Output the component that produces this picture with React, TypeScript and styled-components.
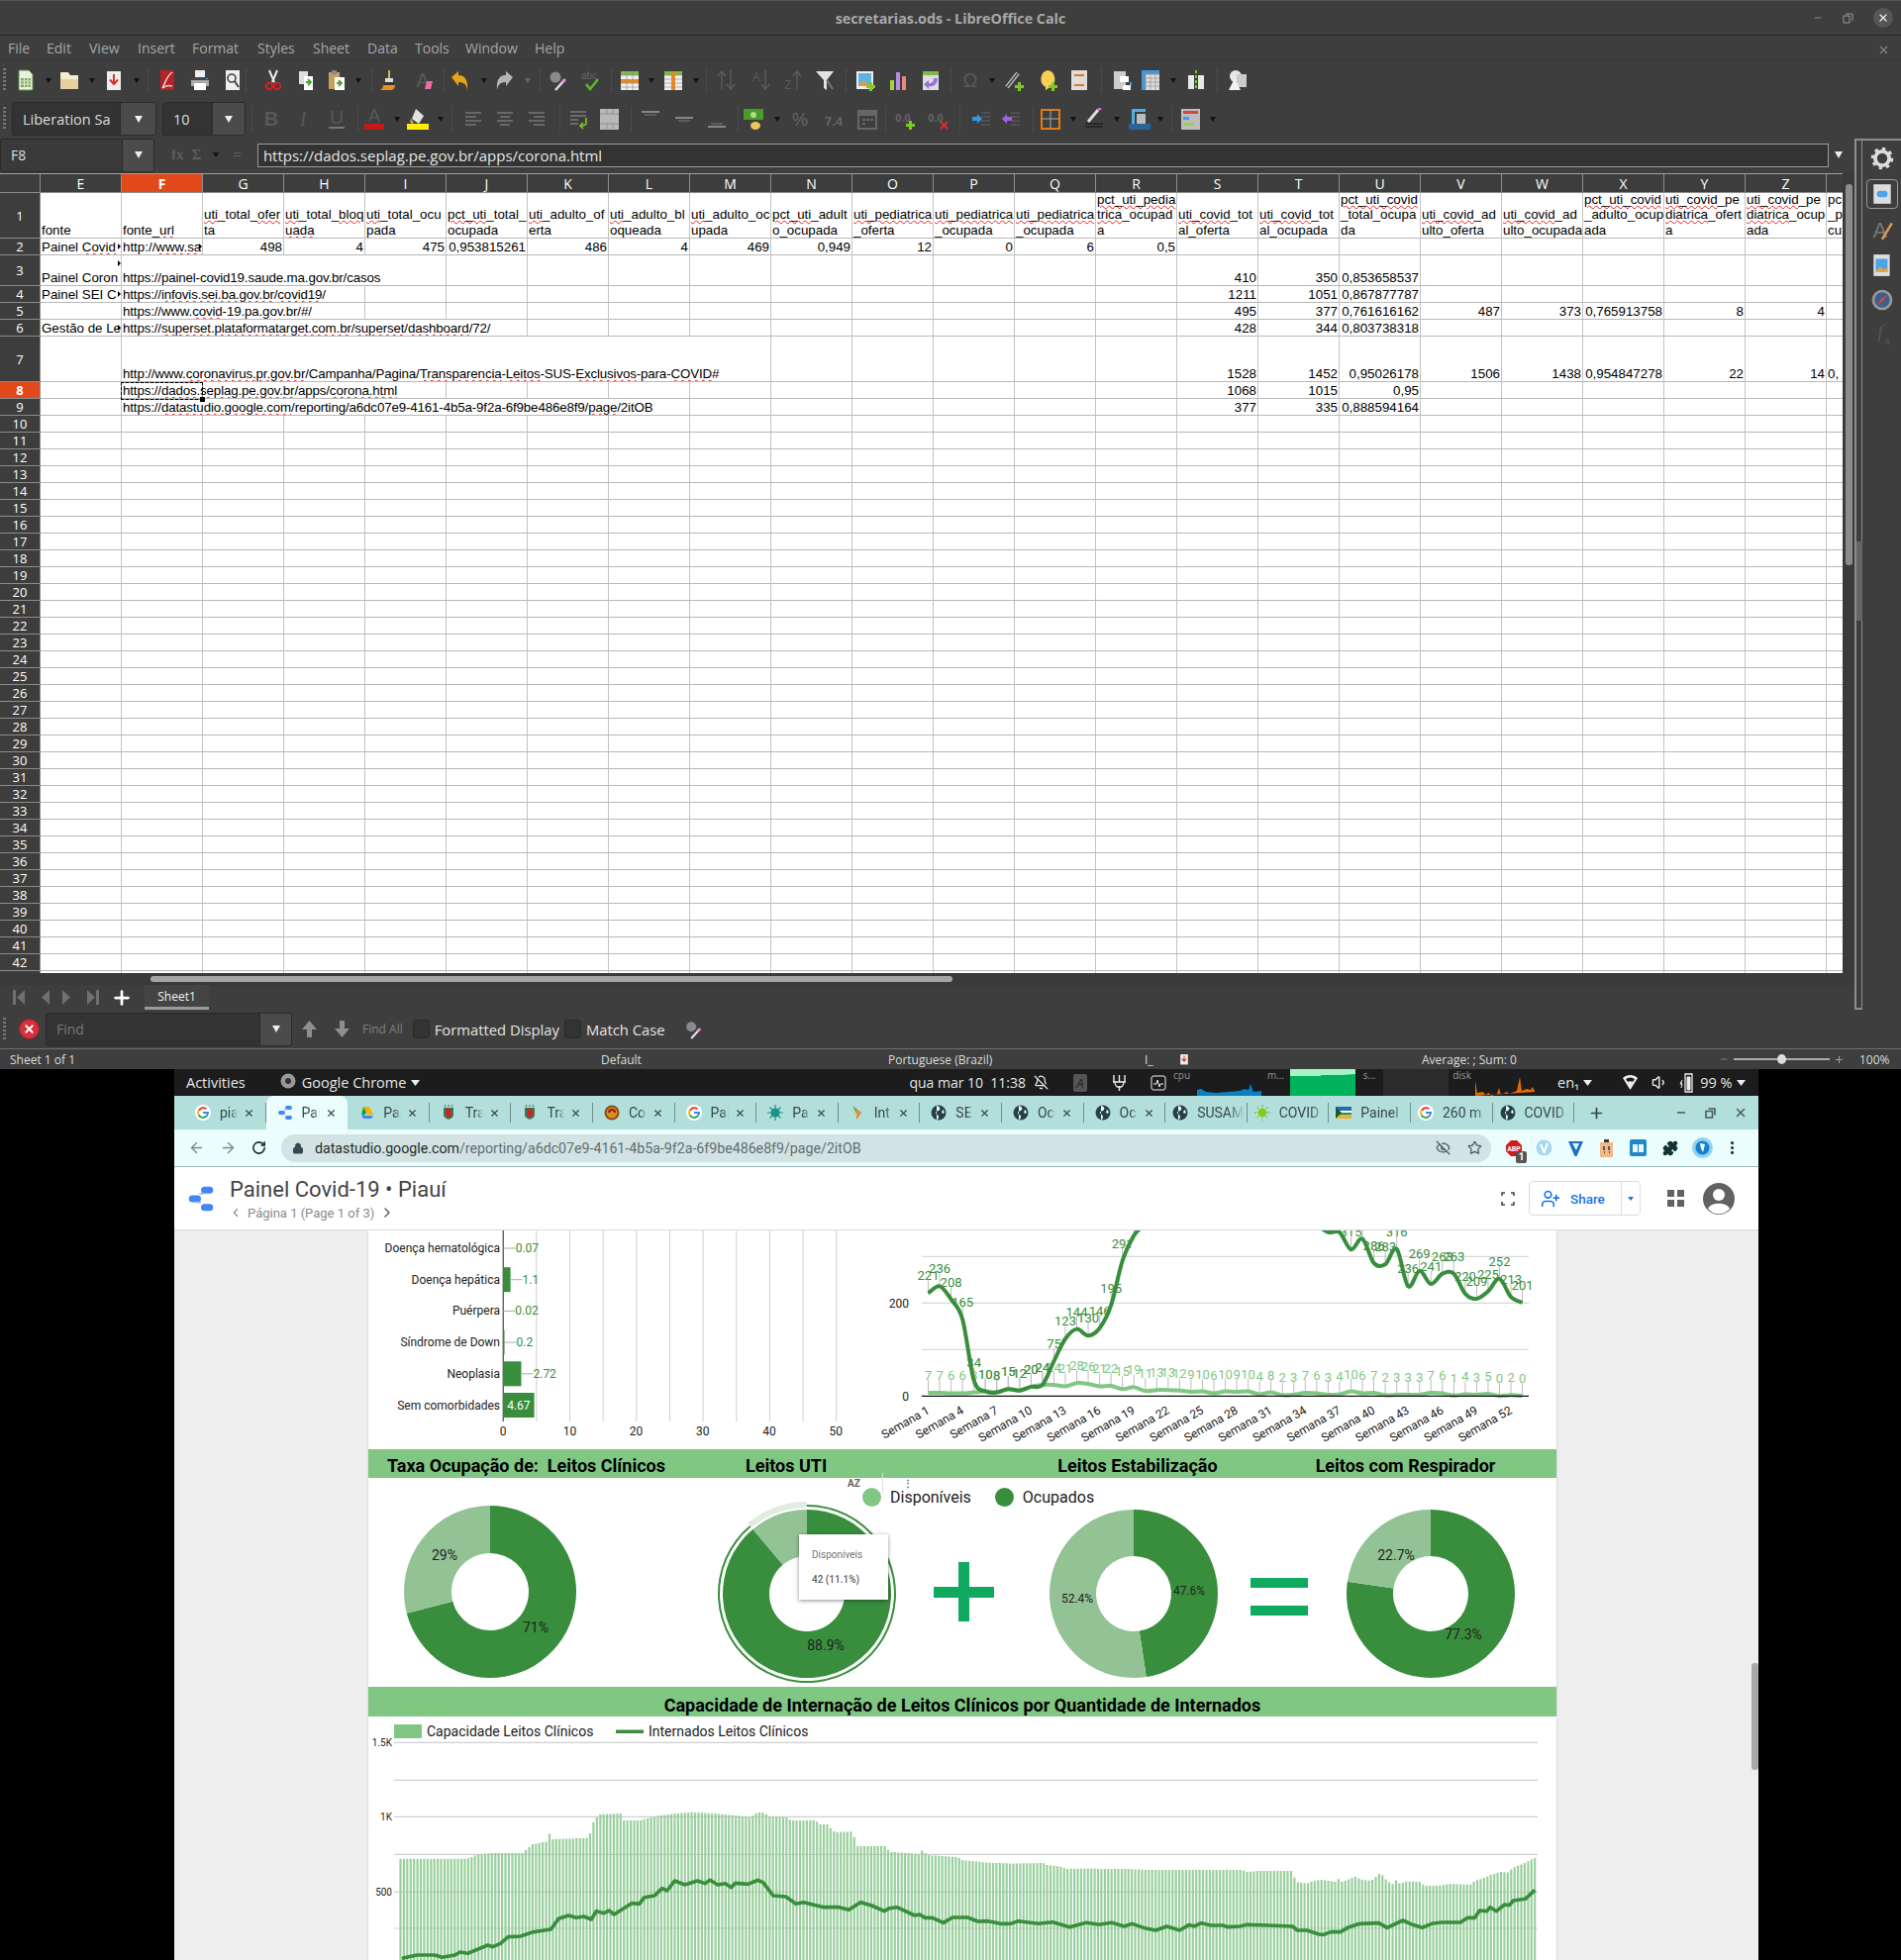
import React from "react";
import styled, { createGlobalStyle } from "styled-components";
import { ArrowLeft, ArrowRight, BellOff, ChevronLeft, ChevronRight, EyeOff, Lock, Minus, MoreVertical, Plus, Puzzle, RotateCw, Star, UserPlus, Volume1, X } from "lucide-react";

const UI = `"Open Sans", "Noto Sans", sans-serif`;
const RB = `Roboto, "Liberation Sans", sans-serif`;
const DARK = "#388e3c";
const LIGHT = "#81c784";
const PALE = "#93c295";

const Global = createGlobalStyle`
    html, body { margin: 0; padding: 0; background: #000; }
    #root { width: 1920px; height: 1980px; overflow: hidden; }
    * { box-sizing: border-box; }
`;

/* ---------- LibreOffice window ---------- */

const Calc = styled.div`
    width: 1920px;
    height: 1080px;
    display: flex;
    flex-direction: column;
    background: #3e3e3e;
    color: #ddd;
    font-family: ${UI};
    overflow: hidden;
`;

const TitleBar = styled.div`
    height: 36px;
    flex: none;
    display: flex;
    align-items: center;
    justify-content: center;
    position: relative;
    border-top: 1px solid #555;
    border-bottom: 1px solid #2b2b2b;
    font-size: 14.3px;
    font-weight: 700;
    color: #a8a8a8;
`;

const WindowButtons = styled.div`
    position: absolute;
    right: 8px;
    top: 7px;
    display: flex;
    align-items: center;
    gap: 20px;
    color: #999;
`;

const CloseCircle = styled.div`
    width: 20px;
    height: 20px;
    border-radius: 50%;
    background: #565656;
    color: #eee;
    display: flex;
    align-items: center;
    justify-content: center;
`;

const MenuBar = styled.div`
    height: 26px;
    flex: none;
    display: flex;
    align-items: center;
    padding: 0 8px;
    border-bottom: 1px solid #383838;
    font-size: 14px;
    color: #a6a6a6;
    position: relative;
`;

const MenuItem = styled.span<{ $w: number }>`
    width: ${p => p.$w}px;
`;

const MenuClose = styled.div`
    position: absolute;
    right: 11px;
    top: 6px;
    color: #888;
`;

const ToolRow = styled.div<{ $h: number }>`
    height: ${p => p.$h}px;
    flex: none;
    display: flex;
    align-items: center;
    padding-left: 3px;
`;

const Grip = styled.div`
    width: 3px;
    height: 24px;
    flex: none;
    background: repeating-linear-gradient(to bottom, #777 0 2px, transparent 2px 4px);
`;

const ToolSlot = styled.div<{ $gap: number; $w: number }>`
    flex: none;
    width: ${p => p.$w}px;
    margin-left: ${p => p.$gap}px;
    display: flex;
    align-items: center;
    justify-content: center;
`;

const ToolSep = styled.div`
    width: 1px;
    height: 26px;
    background: #4b4b4b;
`;

const DropArrow = styled.div<{ $dim?: boolean }>`
    width: 0;
    height: 0;
    border-left: 3.5px solid transparent;
    border-right: 3.5px solid transparent;
    border-top: 5px solid ${p => (p.$dim ? "#666" : "#111")};
`;

const Combo = styled.div<{ $w: number; $ml: number }>`
    width: ${p => p.$w}px;
    margin-left: ${p => p.$ml}px;
    height: 34px;
    flex: none;
    display: flex;
    border: 1px solid #2a2a2a;
    border-radius: 3px;
    background: #333;
    font-size: 14.5px;
    color: #ddd;
    overflow: hidden;
`;

const ComboText = styled.div`
    flex: 1;
    display: flex;
    align-items: center;
    padding-left: 10px;
    white-space: nowrap;
    overflow: hidden;
`;

const ComboButton = styled.div<{ $w: number }>`
    width: ${p => p.$w}px;
    flex: none;
    background: #4b4b4b;
    border-left: 1px solid #2a2a2a;
    display: flex;
    align-items: center;
    justify-content: center;
`;

const WhiteCaret = styled.div`
    width: 0;
    height: 0;
    border-left: 4.5px solid transparent;
    border-right: 4.5px solid transparent;
    border-top: 7px solid #eee;
`;

const Body = styled.div`
    flex: 1;
    display: flex;
    min-height: 0;
`;

const LeftColumn = styled.div`
    width: 1873px;
    flex: none;
    display: flex;
    flex-direction: column;
`;

const FormulaBar = styled.div`
    height: 35px;
    flex: none;
    display: flex;
    align-items: center;
    position: relative;
    padding-bottom: 2px;
`;

const NameBox = styled(Combo)`
    background: #3a3a3a;
    font-size: 14px;
`;

const FormulaIcon = styled.span<{ $x: number }>`
    margin-left: ${p => p.$x}px;
    color: #5f5f5f;
    font-family: "Liberation Serif", serif;
    font-size: 15px;
    font-weight: 700;
`;

const FormulaInput = styled.div`
    margin-left: 16px;
    width: 1587px;
    height: 24px;
    border: 1px solid #9b9b9b;
    background: #333;
    display: flex;
    align-items: center;
    padding-left: 5px;
    font-size: 15px;
    color: #e6e6e6;
`;

const FormulaCaret = styled.div`
    margin-left: 6px;
`;

const SheetWrap = styled.div`
    height: 808px;
    flex: none;
    display: flex;
`;

const SheetView = styled.div`
    width: 1861px;
    flex: none;
    overflow: hidden;
    position: relative;
    background: #fff;
    font-family: "Liberation Sans", Arial, sans-serif;
    color: #000;
`;

const Row = styled.div<{ $h: number }>`
    display: flex;
    height: ${p => p.$h}px;
    width: 2000px;
`;

const HeadRow = styled(Row)`
    border-top: 1px solid #a0a0a0;
`;

const RowHead = styled.div<{ $on?: boolean }>`
    width: 41px;
    flex: none;
    background: ${p => (p.$on ? "#e1491a" : "#3d3d3d")};
    border-right: 1px solid #8c8c8c;
    border-bottom: 1px solid #8c8c8c;
    color: #fff;
    font: ${p => (p.$on ? 700 : 400)} 13px ${UI};
    display: flex;
    align-items: center;
    justify-content: center;
`;

const ColHead = styled(RowHead)`
    width: 82px;
    font-size: 14px;
`;

const Cell = styled.div<{ $span?: number; $right?: boolean }>`
    width: ${p => (p.$span ?? 1) * 82}px;
    flex: none;
    border-right: 1px solid #c3c3c3;
    border-bottom: 1px solid #b8b8b8;
    font-size: 13.33px;
    letter-spacing: ${p => ((p.$span ?? 1) > 1 ? "-0.14px" : "0")};
    line-height: 15.3px;
    padding: 0 1px;
    display: flex;
    flex-direction: column;
    justify-content: flex-end;
    align-items: ${p => (p.$right ? "flex-end" : "flex-start")};
    white-space: nowrap;
    overflow: hidden;
    position: relative;
`;

const Squiggle = styled.span`
    text-decoration: underline wavy #e81c1c 1.3px;
    text-underline-offset: 1px;
`;

const ClipMark = styled.i`
    position: absolute;
    right: 0;
    top: 5px;
    width: 0;
    height: 0;
    border-top: 3px solid transparent;
    border-bottom: 3px solid transparent;
    border-left: 3px solid #000;
`;

const CellCursor = styled.div`
    position: absolute;
    left: 122px;
    top: 211px;
    width: 83px;
    height: 18px;
    border: 1px dashed #000;
    outline: 1px solid rgba(0, 0, 0, 0.5);
    outline-offset: -1px;
    &::after {
        content: "";
        position: absolute;
        right: -3px;
        bottom: -3px;
        width: 5px;
        height: 5px;
        background: #000;
    }
`;

const VScroll = styled.div`
    width: 12px;
    flex: none;
    background: #3a3a3a;
    position: relative;
`;

const VThumb = styled.div`
    position: absolute;
    left: 3px;
    top: 11px;
    width: 7px;
    height: 385px;
    border-radius: 3px;
    background: #8c8c8c;
`;

const HScroll = styled.div`
    height: 12px;
    flex: none;
    background: #3a3a3a;
    padding: 3px 0 0 152px;
    position: relative;
`;

const HThumb = styled.div`
    width: 810px;
    height: 6px;
    border-radius: 3px;
    background: #a5a5a5;
`;

const SheetTabs = styled.div`
    height: 25px;
    flex: none;
    display: flex;
    align-items: center;
    padding-left: 12px;
    gap: 11px;
`;

const SheetTab = styled.div`
    margin-left: 1px;
    width: 65px;
    height: 25px;
    background: #444;
    border-bottom: 3px solid #9a9a9a;
    display: flex;
    align-items: center;
    justify-content: center;
    font-size: 12px;
    color: #eee;
`;

const Sidebar = styled.div`
    flex: 1;
    border-top: 2px solid #8c8c8c;
    border-left: 2px solid #8c8c8c;
    display: flex;
    position: relative;
    height: 880px;
`;

const DeckStrip = styled.div`
    width: 6px;
    border-right: 1px solid #8c8c8c;
    border-bottom: 2px solid #8c8c8c;
`;

const DeckIcons = styled.div`
    flex: 1;
    display: flex;
    flex-direction: column;
    align-items: center;
    padding-top: 6px;
    gap: 11px;
`;

const DeckActive = styled.div`
    width: 32px;
    height: 30px;
    border: 1px solid #999;
    border-radius: 4px;
    display: flex;
    align-items: center;
    justify-content: center;
    margin: -2px 0 -1px;
`;

const DeckHandle = styled.div`
    position: absolute;
    left: 0;
    top: 405px;
    width: 6px;
    height: 80px;
    background: #666;
`;

const FindBar = styled.div`
    height: 39px;
    flex: none;
    display: flex;
    align-items: center;
    padding-left: 3px;
    font-size: 14.8px;
    color: #e4e4e4;
`;

const FindBadge = styled.div`
    width: 21px;
    height: 21px;
    margin-left: 13px;
    border-radius: 50%;
    background: #d8303a;
    border: 1px solid #992028;
    color: #fff;
    display: flex;
    align-items: center;
    justify-content: center;
    flex: none;
`;

const FindField = styled(Combo)`
    color: #777;
    font-size: 14px;
`;

const FindAll = styled.span`
    margin-left: 11px;
    color: #7e7e7e;
    font-size: 12px;
`;

const CheckBox = styled.span<{ $ml: number }>`
    width: 17px;
    height: 19px;
    flex: none;
    margin-left: ${p => p.$ml}px;
    margin-right: 5px;
    background: #333;
    border: 1px solid #2a2a2a;
    border-radius: 3px;
`;

const StatusBar = styled.div`
    height: 21px;
    flex: none;
    display: flex;
    align-items: center;
    border-top: 1px solid #6e6e6e;
    font-size: 12px;
    color: #ddd;
`;

const StatusText = styled.span<{ $w: number; $ml: number }>`
    width: ${p => p.$w}px;
    margin-left: ${p => p.$ml}px;
    flex: none;
    white-space: nowrap;
`;

const ZoomSlider = styled.div`
    width: 97px;
    margin: 0 4px 0 5px;
    height: 2px;
    background: #aaa;
    position: relative;
    &::after {
        content: "";
        position: absolute;
        left: 44px;
        top: -4px;
        width: 9px;
        height: 10px;
        border-radius: 50%;
        background: #ddd;
    }
`;

/* ---------- Desktop and Chrome ---------- */

const Desktop = styled.div`
    width: 1920px;
    height: 900px;
    background: #000;
    padding-left: 176px;
`;

const Chrome = styled.div`
    width: 1600px;
    height: 900px;
    display: flex;
    flex-direction: column;
    font-family: ${RB};
`;

const GnomeBar = styled.div`
    height: 27px;
    flex: none;
    background: #1c1c1c;
    color: #e6e6e6;
    display: flex;
    align-items: center;
    font: 14.5px ${UI};
    padding-left: 12px;
    position: relative;
`;

const GnomeText = styled.span<{ $ml: number }>`
    margin-left: ${p => p.$ml}px;
    white-space: nowrap;
`;

const ClockText = styled(GnomeText)`
    font-size: 14px;
`;

const Meter = styled.div<{ $ml: number; $w: number }>`
    width: ${p => p.$w}px;
    height: 27px;
    margin-left: ${p => p.$ml}px;
    flex: none;
`;

const MeterLabel = styled.span<{ $w: number }>`
    width: ${p => p.$w}px;
    flex: none;
    align-self: flex-start;
    text-align: center;
    font-size: 10px;
    color: #999;
    line-height: 13px;
`;

const TabStrip = styled.div`
    height: 34px;
    flex: none;
    background: #b2dfdb;
    display: flex;
    align-items: center;
    padding-left: 10px;
    position: relative;
    color: #37474f;
`;

const Tab = styled.div<{ $active?: boolean; $pad: number }>`
    width: 82.6px;
    height: 34px;
    flex: none;
    display: flex;
    align-items: center;
    padding-left: ${p => p.$pad}px;
    gap: 6px;
    font-size: 14px;
    background: ${p => (p.$active ? "#ecfdfd" : "transparent")};
    border-radius: ${p => (p.$active ? "8px 8px 0 0" : "0")};
    position: relative;
    &::after {
        content: "";
        position: absolute;
        right: 0;
        top: 7px;
        height: 20px;
        width: 1px;
        background: ${p => (p.$active ? "transparent" : "#6f8f8c")};
    }
`;

const TabLabel = styled.span<{ $w: number }>`
    width: ${p => p.$w}px;
    margin-left: 3px;
    overflow: hidden;
    white-space: nowrap;
    flex: none;
    -webkit-mask-image: linear-gradient(to right, #000 65%, transparent);
    mask-image: linear-gradient(to right, #000 65%, transparent);
`;

const NewTab = styled.div`
    margin-left: 14px;
    display: flex;
`;

const ChromeControls = styled.div`
    position: absolute;
    right: 11px;
    top: 10px;
    display: flex;
    gap: 18px;
    align-items: center;
    color: #4a5a5a;
`;

const AddressRow = styled.div`
    height: 38px;
    flex: none;
    background: #ecfdfd;
    border-bottom: 1px solid #9fb5b5;
    display: flex;
    align-items: center;
    padding-left: 14px;
    color: #7b8c8c;
`;

const NavIcon = styled.div<{ $ml: number; $color?: string; $mr?: number }>`
    margin-left: ${p => p.$ml}px;
    margin-right: ${p => p.$mr ?? 0}px;
    display: flex;
    align-items: center;
    flex: none;
    color: ${p => p.$color ?? "inherit"};
    position: relative;
`;

const Omnibox = styled.div`
    width: 1222px;
    height: 28px;
    margin-left: 15px;
    background: #d3e2e2;
    border-radius: 14px;
    display: flex;
    align-items: center;
    padding-left: 11px;
    color: #37474f;
    flex: none;
`;

const UrlText = styled.div`
    margin-left: 11px;
    font-size: 14.2px;
    color: #5e7070;
    flex: 1;
    white-space: nowrap;
    & b {
        font-weight: 400;
        color: #1f2b2b;
    }
`;

const AbpBadge = styled.span`
    position: absolute;
    right: -4px;
    bottom: -6px;
    width: 11px;
    height: 12px;
    background: #555;
    color: #fff;
    font-size: 10px;
    font-weight: 700;
    line-height: 12px;
    text-align: center;
    border-radius: 2px;
`;

const PageHeader = styled.div`
    height: 64px;
    flex: none;
    background: #fff;
    border-bottom: 1px solid #dadada;
    display: flex;
    align-items: center;
    padding-left: 13px;
`;

const Titles = styled.div`
    margin-left: 15px;
    flex: 1;
    display: flex;
    flex-direction: column;
`;

const ReportTitle = styled.div`
    font-size: 22px;
    line-height: 28px;
    color: #444;
`;

const PageNav = styled.div`
    display: flex;
    align-items: center;
    font-size: 13px;
    color: #8a8a8a;
    margin: 1px 0 0 -1px;
    gap: 5px;
`;

const ShareButton = styled.div`
    margin-left: 14px;
    width: 113px;
    height: 35px;
    border: 1px solid #dadce0;
    border-radius: 4px;
    display: flex;
    align-items: center;
    color: #1a73e8;
    font-size: 13.5px;
    font-weight: 500;
    flex: none;
`;

const ShareMain = styled.div`
    width: 93px;
    display: flex;
    align-items: center;
    gap: 10px;
    padding-left: 11px;
    height: 100%;
    border-right: 1px solid #dadce0;
`;

const ShareCaret = styled.div`
    margin-left: 6px;
    width: 0;
    height: 0;
    border-left: 3.5px solid transparent;
    border-right: 3.5px solid transparent;
    border-top: 4px solid #1a73e8;
`;

const AppsGrid = styled.div`
    margin-left: 27px;
    display: flex;
`;

const Avatar = styled.div`
    margin: 0 24px 0 19px;
    display: flex;
`;

const Report = styled.div`
    flex: 1;
    min-height: 0;
    background: #eee;
    padding-left: 196px;
    position: relative;
    overflow: hidden;
`;

const ReportScroll = styled.div`
    position: absolute;
    right: 0;
    top: 437px;
    width: 7px;
    height: 108px;
    background: #a8a8a8;
    border-radius: 3px;
`;

const Page = styled.div`
    width: 1200px;
    background: #fff;
    box-shadow: 0 0 2px rgba(0, 0, 0, 0.2);
    height: 738px;
    display: flex;
    flex-direction: column;
`;

const TopCharts = styled.div`
    height: 221px;
    flex: none;
    display: flex;
`;

const ChartSvg = styled.svg<{ $ml?: number }>`
    flex: none;
    display: block;
    margin-left: ${p => p.$ml ?? 0}px;
    font-family: ${RB};
`;

const Band = styled.div<{ $h: number; $pt: number; $center?: boolean }>`
    height: ${p => p.$h}px;
    padding-top: ${p => p.$pt}px;
    flex: none;
    background: ${LIGHT};
    color: #000;
    font-size: 18px;
    font-weight: 700;
    display: flex;
    align-items: center;
    justify-content: ${p => (p.$center ? "center" : "flex-start")};
    white-space: pre;
`;

const BandTitle = styled.span<{ $ml: number }>`
    margin-left: ${p => p.$ml}px;
`;

const DonutRow = styled.div`
    height: 211px;
    flex: none;
    display: flex;
    align-items: center;
    padding: 23px 0 0 28px;
    position: relative;
    font-family: ${RB};
`;

const Legend = styled.div`
    position: absolute;
    left: 499px;
    top: 10px;
    display: flex;
    align-items: center;
    font-size: 16px;
    color: #222;
`;

const LegendDot = styled.span<{ $color: string; $ml: number }>`
    width: 19px;
    height: 19px;
    border-radius: 50%;
    background: ${p => p.$color};
    margin: 0 9px 0 ${p => p.$ml}px;
`;

const ChartTools = styled.div`
    position: absolute;
    left: 484px;
    top: -5px;
    display: flex;
    align-items: center;
    font-size: 10px;
    font-weight: 700;
    color: #666;
`;

const ToolDivider = styled.span`
    width: 1px;
    height: 20px;
    background: #ddd;
    margin: 0 20px 0 22px;
`;

const ToolTip = styled.div`
    position: absolute;
    left: 435px;
    top: 57px;
    width: 90px;
    height: 66px;
    background: #fff;
    box-shadow: 0 1px 4px rgba(0, 0, 0, 0.45);
    padding: 15px 0 0 13px;
    font-size: 10px;
    color: #757575;
    display: flex;
    flex-direction: column;
    gap: 14px;
`;

const Strong = styled.span`
    font-weight: 500;
    color: #616161;
`;

const MathSign = styled.div<{ $w: number; $h: number; $ml: number; $mt: number }>`
    width: ${p => p.$w}px;
    height: ${p => p.$h}px;
    margin-left: ${p => p.$ml}px;
    margin-top: ${p => p.$mt}px;
    flex: none;
    position: relative;
    color: #0fa960;
`;

const PlusH = styled.span`
    position: absolute;
    left: 0;
    right: 0;
    top: 25px;
    height: 11px;
    background: currentColor;
`;

const PlusV = styled.span`
    position: absolute;
    top: 0;
    bottom: 0;
    left: 25px;
    width: 11px;
    background: currentColor;
`;

const EqualBar = styled.span<{ $top: number }>`
    position: absolute;
    left: 0;
    right: 0;
    top: ${p => p.$top}px;
    height: 10px;
    background: currentColor;
`;

const MathSpacer = styled.div`
    width: 130px;
    flex: none;
`;

/* ---------- Toolbar glyphs ---------- */

const T = (x: number, y: number, s: string, size: number, fill: string, extra: object = {}) => (
    <text x={x} y={y} fontSize={size} fill={fill} textAnchor="middle" fontFamily="Liberation Sans, sans-serif" {...extra}>{s}</text>
);

const Lines = (ys: number[], x1: number, x2: number, c = "#777") => ys.map(y => <path key={y} d={`M${x1} ${y}H${x2}`} stroke={c} strokeWidth="1.6" />);

const AlignLines = ({ from, to }: { from: number; to: number }) => (
    <>
        <path d="M3 5H19M3 13H19" stroke="#777" strokeWidth="1.6" />
        <path d={`M${from} 9H${to}M${from} 17H${to}`} stroke="#777" strokeWidth="1.6" />
    </>
);

const GLYPHS: Record<string, React.ReactNode> = {
    new: <><path d="M4 1h10l4 4v16H4z" fill="#e9f0df" stroke="#5e8f45" /><path d="M6 9h10v9H6z" fill="#79ab55" /><path d="M6 12h10M6 15h10M9.5 9v9M13 9v9" stroke="#e9f0df" /></>,
    open: <><path d="M2 7h18v13H2z" fill="#e9cf9f" /><path d="M2 3h8l2 3h8v4H2z" fill="#f7ecd2" /></>,
    save: <><path d="M4 2h14v19H4z" fill="#eee" /><path d="M11 5v9M7 10.5l4 4.5 4-4.5" stroke="#d9302c" strokeWidth="2" fill="none" /></>,
    pdf: <><path d="M4 1h14v20H4z" fill="#b3232a" /><path d="M16 3C10 7 10 12 6 19c4-3 7-3 10-2" stroke="#f3d4d4" strokeWidth="1.5" fill="none" /></>,
    print: <><path d="M6 1h10v7H6z" fill="#eee" /><path d="M2 8h18v9H2z" fill="#aaa" /><path d="M2 8h18v3H2z" fill="#444" /><path d="M5 14h12v7H5z" fill="#fff" /><path d="M17 9h2v1h-2z" fill="#3aa0ea" /></>,
    preview: <><path d="M4 1h14v20H4z" fill="#eee" /><circle cx="10" cy="9" r="4" fill="none" stroke="#444" strokeWidth="1.6" /><path d="M13 12l4 6" stroke="#444" strokeWidth="2" /></>,
    cut: <><path d="M7 1l5 12M15 1l-5 12" stroke="#e8e8e8" strokeWidth="2" /><circle cx="7" cy="17" r="3.3" fill="none" stroke="#d81f26" strokeWidth="2" /><circle cx="15" cy="17" r="3.3" fill="none" stroke="#d81f26" strokeWidth="2" /></>,
    copy: <><path d="M4 2h9v13H4z" fill="#ddd" /><path d="M9 7h9v14H9z" fill="#fff" /><path d="M11 13h4M13 10l3 3-3 3" stroke="#4f9e3a" strokeWidth="1.8" fill="none" /></>,
    paste: <><path d="M3 3h11v17H3z" fill="#c99f5f" /><path d="M6 1h5v4H6z" fill="#888" /><path d="M9 8h10v13H9z" fill="#fff" /><path d="M11 14h4M13 11l3 3-3 3" stroke="#4f9e3a" strokeWidth="1.8" fill="none" /></>,
    clone: <><path d="M11 1h2v9h-2z" fill="#d7b25f" /><path d="M8 9h8v4H8z" fill="#ddd" /><path d="M7 13h10v3H7z" fill="#333" /><path d="M6 16h12c0 2-1 4-3 5H3c2-1 3-3 3-5z" fill="#e89024" /></>,
    clear: <>{T(9, 18, "A", 20, "#595959")}<path d="M13 12h6l-2 8h-6z" fill="#f06ca8" /></>,
    undo: <path d="M2 8l7-6v4c6 0 10 4 9 15-1-6-4-8-9-8v4z" fill="#e6a317" />,
    redo: <path d="M20 8l-7-6v4C7 6 3 10 4 21c1-6 4-8 9-8v4z" fill="#b5b5b5" />,
    find: <><circle cx="9" cy="8" r="5.5" fill="#8a8a8a" /><path d="M9 21l9-10" stroke="#ddd" strokeWidth="2.5" /><path d="M16 13l3-3" stroke="#e78ad8" strokeWidth="3" /></>,
    spell: <>{T(9, 10, "abc", 10, "#666")}<path d="M6 15l4 5 8-10" stroke="#5cb82e" strokeWidth="2.6" fill="none" /></>,
    rows: <><path d="M2 2h18v19H2z" fill="#eee" /><path d="M2 2h18v4H2z" fill="#7fb94a" /><path d="M2 10h18v4H2z" fill="#ee8a1c" /><path d="M2 6h18M2 14h18M2 18h18M8 2v19M14 2v19" stroke="#888" strokeWidth=".6" /></>,
    cols: <><path d="M2 2h18v19H2z" fill="#eee" /><path d="M2 2h18v4H2z" fill="#7fb94a" /><path d="M9 2h4v19H9z" fill="#ee8a1c" /><path d="M2 6h18M2 10h18M2 14h18M2 18h18" stroke="#888" strokeWidth=".6" /></>,
    sort: <path d="M6 21V2M2 7l4-5 4 5M15 1v19M11 15l4 5 4-5" stroke="#5a5a5a" strokeWidth="1.5" fill="none" />,
    sortAZ: <>{T(7, 12, "A", 12, "#5a5a5a")}<path d="M16 1v19M12 15l4 5 4-5" stroke="#5a5a5a" strokeWidth="1.5" fill="none" /></>,
    sortZA: <>{T(7, 20, "Z", 12, "#5a5a5a")}<path d="M16 20V2M12 7l4-5 4 5" stroke="#5a5a5a" strokeWidth="1.5" fill="none" /></>,
    filter: <><path d="M2 2h18l-7 9v10l-3-2v-8z" fill="#e2e2e2" /><path d="M13 11l6 9" stroke="#777" strokeWidth="2" /></>,
    image: <><path d="M2 2h17v18H2z" fill="#eee" /><path d="M4 4h13v13H4z" fill="#5bb4e6" /><path d="M4 17l5-6 4 4 4-2v4z" fill="#e69a3a" /><path d="M15 13h3v3h3v3h-3v3h-3v-3h-3v-3h3z" fill="#7ecb20" /></>,
    chart: <><path d="M3 11h4v10H3z" fill="#a4d43c" /><path d="M9 3h4v18H9z" fill="#b58ce0" /><path d="M15 7h4v14h-4z" fill="#e78a7a" /></>,
    pivot: <><path d="M3 2h16v19H3z" fill="#ddd" /><path d="M3 2h16v4H3z" fill="#7fb94a" /><path d="M18 9c0 6-4 9-9 8v3l-5-5 5-4v3c4 0 5-2 5-5z" fill="#9c6fe0" /></>,
    omega: <>{T(11, 18, "Ω", 20, "#5a5a5a")}</>,
    link: <><path d="M4 18L15 4" stroke="#ccc" strokeWidth="4" /><path d="M4 18L15 4" stroke="#3e3e3e" strokeWidth="1.6" /><path d="M15 13h3v3h3v3h-3v3h-3v-3h-3v-3h3z" fill="#7ecb20" /></>,
    comment: <><path d="M11 1a8 9 0 0 1 3 17l-5 3v-3A8 9 0 0 1 11 1z" fill="#f7cf52" /><path d="M15 13h3v3h3v3h-3v3h-3v-3h-3v-3h3z" fill="#7ecb20" /></>,
    headers: <><path d="M3 1h16v20H3z" fill="#ddd" /><path d="M6 5h10v2H6zM6 15h10v2H6z" fill="#e07b12" /></>,
    printArea: <><path d="M3 2h12v18H3z" fill="#ccc" /><path d="M9 7h9v6H9z" fill="#fff" /><path d="M12 16h8v5h-8z" fill="#fff" /><path d="M19 13h2v3h-2z" fill="#3aa0ea" /></>,
    grid: <><path d="M2 1h18v20H2z" fill="#ddd" /><path d="M2 1h4v20H2zM2 1h18v4H2z" fill="#3f9be0" /><path d="M2 5h18M2 9h18M2 13h18M2 17h18M6 1v20M11 1v20M16 1v20" stroke="#888" strokeWidth=".6" /></>,
    freeze: <><path d="M3 6h6v14H3zM13 6h6v14h-6z" fill="#e8e8e8" /><path d="M11 1v20" stroke="#7ecb20" strokeWidth="2" strokeDasharray="3 2" /></>,
    shapes: <><circle cx="9" cy="7" r="6" fill="#e8e8e8" /><path d="M10 5h10v13H10z" fill="#ccc" /><path d="M8 9l6 12H2z" fill="#f2f2f2" /></>,
    bold: T(11, 18, "B", 20, "#585858", { fontWeight: 700 }),
    italic: T(11, 18, "I", 20, "#585858", { fontStyle: "italic", fontFamily: "Liberation Serif, serif" }),
    under: <>{T(11, 16, "U", 19, "#585858")}<path d="M3 20h16" stroke="#777" strokeWidth="2" /></>,
    fontColor: <>{T(11, 14, "A", 18, "#585858")}<path d="M1 16h20v6H1z" fill="#c61a1a" /></>,
    hilite: <><path d="M9 1l8 7-5 8-7-5z" fill="#e2e2e2" /><path d="M4 11c-1 2-1 4 1 5l2-1z" fill="#e9a13a" /><path d="M0 16h22v6H0z" fill="#ffee00" /></>,
    alignL: <AlignLines from={3} to={14} />,
    alignC: <AlignLines from={6} to={16} />,
    alignR: <AlignLines from={8} to={19} />,
    wrap: <>{Lines([4, 8], 2, 18)}{Lines([12, 16], 2, 10)}<path d="M18 10v5c0 2-2 3-5 3M15 15l-3 3 3 3" stroke="#7ecb20" strokeWidth="1.6" fill="none" /></>,
    merge: <><path d="M2 1h19v21H2z" fill="#b8b8b8" /><path d="M2 6h19M2 16h19M9 1v5M15 1v5M9 16v5M15 16v5" stroke="#8f8f8f" /></>,
    alignTop: <>{Lines([4], 2, 20, "#999")}{Lines([7], 5, 17, "#666")}</>,
    alignMid: <>{Lines([10], 2, 20, "#999")}{Lines([13], 5, 17, "#666")}</>,
    alignBot: <>{Lines([19], 2, 20, "#999")}{Lines([16], 5, 17, "#666")}</>,
    money: <><path d="M1 1h20v11H1z" fill="#4d9a2c" /><circle cx="11" cy="7" r="3" fill="#a9e07f" /><ellipse cx="13" cy="18" rx="5" ry="4" fill="#e8c65c" /></>,
    pct: T(11, 18, "%", 18, "#666"),
    num: T(11, 18, "7.4", 13, "#666", { fontWeight: 700 }),
    date: <><path d="M2 3h18v18H2z" fill="none" stroke="#666" strokeWidth="2" /><path d="M2 3h18v5H2z" fill="#666" /><path d="M6 11h3v2H6zM10 11h3v2h-3zM14 11h3v2h-3zM6 15h3v2H6z" fill="#666" /></>,
    addDec: <>{T(8, 14, "0.0", 11, "#666", { fontWeight: 700 })}<path d="M14 13h3v3h3v3h-3v3h-3v-3h-3v-3h3z" fill="#7ecb20" /></>,
    delDec: <>{T(8, 14, "0.0", 11, "#666", { fontWeight: 700 })}<path d="M13 14l7 7M20 14l-7 7" stroke="#d9302c" strokeWidth="2" /></>,
    indent: <>{Lines([5, 9, 13, 17], 11, 20, "#555")}<path d="M2 9h5V6l5 5-5 5v-3H2z" fill="#2f9be8" /></>,
    outdent: <>{Lines([5, 9, 13, 17], 11, 20, "#555")}<path d="M12 9H7V6l-5 5 5 5v-3h5z" fill="#9a64e0" /></>,
    borders: <><path d="M2 2h18v19H2z" fill="none" stroke="#e8770f" strokeWidth="2" /><path d="M11 2v19M2 11h18" stroke="#aaa" /></>,
    lineStyle: <><path d="M5 14L15 2" stroke="#ddd" strokeWidth="3" /><path d="M15 2l3-2" stroke="#dc6ad0" strokeWidth="3" /><path d="M2 16h18M2 19h18" stroke="#222" strokeWidth="1.4" /></>,
    bg: <><path d="M3 1h14v3H6v12H3z" fill="#4bb0ea" /><path d="M8 6h9v10H8z" fill="#bcbcbc" /><path d="M0 16h22v6H0z" fill="#2a64a0" /></>,
    cond: <><path d="M2 1h19v21H2z" fill="#bdbdbd" /><path d="M4 3h15v3H4z" fill="#d64545" /><path d="M4 9h6v3H4z" fill="#3aa0ea" /><path d="M4 15h11v3H4z" fill="#9ccf4a" /></>,
    gear: <><circle cx="11" cy="11" r="6.5" fill="none" stroke="#ddd" strokeWidth="3.5" /><circle cx="11" cy="11" r="9" fill="none" stroke="#ddd" strokeWidth="2.6" strokeDasharray="3.2 3.8" /></>,
    props: <><path d="M3 2h16v18H3z" fill="#ddd" /><rect x="6" y="8" width="10" height="6" rx="3" fill="#4aa5ea" /></>,
    styles: <>{T(9, 17, "A", 20, "#777")}<path d="M20 4L11 19" stroke="#d29a5a" strokeWidth="2.4" /></>,
    gallery: <><path d="M3 1h15v20H3z" fill="#ddd" /><path d="M5 5h11v12H5z" fill="#4aa5ea" /><path d="M5 17l4-5 3 3 4-2v4z" fill="#e6a33a" /></>,
    navigator: <><circle cx="11" cy="11" r="9.5" fill="#999" /><circle cx="11" cy="11" r="7" fill="#3d5f8c" /><path d="M16 6l-4 6-2-2zM6 16l4-6 2 2z" fill="#d64545" /></>,
    fx: <>{T(9, 15, "f", 17, "#555", { fontStyle: "italic", fontFamily: "Liberation Serif, serif" })}{T(16, 20, "x", 10, "#555")}</>,
};

const Glyph = ({ name, size = 22 }: { name: string; size?: number }) => (
    <svg width={size} height={size} viewBox="0 0 22 22">{GLYPHS[name]}</svg>
);

type ToolDef = [number, string];

const TOOLS_1: ToolDef[] = [
    [26, "new"], [49, "arrow"], [70, "open"], [93, "arrow"], [115, "save"], [138, "arrow"], [149, "sep"], [169, "pdf"], [202, "print"],
    [235, "preview"], [248, "sep"], [276, "cut"], [309, "copy"], [340, "paste"], [362, "arrow"], [375, "sep"], [392, "clone"], [429, "clear"],
    [448, "sep"], [465, "undo"], [489, "arrow"], [509, "redo"], [533, "dim"], [545, "sep"], [563, "find"], [597, "spell"], [617, "sep"],
    [636, "rows"], [658, "arrow"], [680, "cols"], [703, "arrow"], [713, "sep"], [734, "sort"], [768, "sortAZ"], [800, "sortZA"], [833, "filter"],
    [854, "sep"], [874, "image"], [907, "chart"], [940, "pivot"], [960, "sep"], [980, "omega"], [1002, "arrow"], [1024, "link"], [1058, "comment"],
    [1090, "headers"], [1112, "sep"], [1133, "printArea"], [1162, "grid"], [1185, "arrow"], [1208, "freeze"], [1229, "sep"], [1250, "shapes"],
];

const TOOLS_2: ToolDef[] = [
    [254, "sep"], [274, "bold"], [306, "italic"], [340, "under"], [361, "sep"], [378, "fontColor"], [401, "arrow"], [422, "hilite"], [445, "arrow"],
    [456, "sep"], [478, "alignL"], [510, "alignC"], [542, "alignR"], [565, "sep"], [585, "wrap"], [615, "merge"], [637, "sep"], [657, "alignTop"],
    [691, "alignMid"], [724, "alignBot"], [745, "sep"], [761, "money"], [785, "arrow"], [808, "pct"], [842, "num"], [876, "date"], [894, "sep"],
    [915, "addDec"], [948, "delDec"], [969, "sep"], [991, "indent"], [1021, "outdent"], [1043, "sep"], [1061, "borders"], [1084, "arrow"],
    [1105, "lineStyle"], [1128, "arrow"], [1151, "bg"], [1172, "arrow"], [1183, "sep"], [1202, "cond"], [1225, "arrow"],
];

const toolWidth = (k: string) => (k === "arrow" || k === "dim" ? 8 : k === "sep" ? 1 : 22);

const Tools = ({ items, start }: { items: ToolDef[]; start: number }) =>
{
    let end = start;
    return (
        <>
            {items.map(([x, kind]) =>
            {
                const w = toolWidth(kind);
                const gap = Math.round(x - w / 2 - end);
                end += gap + w;
                return (
                    <ToolSlot key={`${x}${kind}`} $gap={gap} $w={w}>
                        {kind === "arrow" && <DropArrow />}
                        {kind === "dim" && <DropArrow $dim />}
                        {kind === "sep" && <ToolSep />}
                        {w === 22 && <Glyph name={kind} />}
                    </ToolSlot>
                );
            } )}
        </>
    );
};

/* ---------- Spreadsheet data ---------- */

const marked = (s: string) =>
    s.split(/(\{[^}]*\})/).map((part, i) =>
        part.startsWith("{") ? <Squiggle key={i}>{part.slice(1, -1)}</Squiggle> : <React.Fragment key={i}>{part}</React.Fragment>
    );

const COLUMNS = "E F G H I J K L M N O P Q R S T U V W X Y Z AA".split(" ");

const HEADERS = [
    "fonte", "fonte_{url}", "{uti}_total_{ofer}|ta", "{uti}_total_{bloq}|{uada}", "{uti}_total_ocu|pada", "{pct_uti}_total_|ocupada",
    "{uti}_adulto_of|erta", "{uti}_adulto_bl|oqueada", "{uti}_adulto_oc|upada", "{pct_uti}_adult|o_ocupada", "{uti_pediatrica}|_oferta",
    "{uti_pediatrica}|_ocupada", "{uti_pediatrica}|_ocupada", "{pct_uti_pedia}|{trica}_ocupad|a", "{uti_covid}_tot|al_oferta", "{uti_covid}_tot|al_ocupada",
    "{pct_uti_covid}|_total_ocupa|da", "{uti_covid}_ad|ulto_oferta", "{uti_covid}_ad|ulto_ocupada", "{pct_uti_covid}|_adulto_ocup|ada",
    "{uti_covid}_pe|{diatrica}_ofert|a", "{uti_covid}_pe|{diatrica}_ocup|ada", "pc|_p|cu",
];

type CellDef = { t: string; n?: boolean; span?: number; clip?: boolean };

const num = (t: string): CellDef => ({ t, n: true });
const NONE: CellDef = { t: "" };
const blanks = (n: number): CellDef[] => Array.from({ length: n }, () => NONE);

const ROWS: { h: number; cells: CellDef[] }[] = [
    { h: 17, cells: [{ t: "Painel {Covid}", clip: true }, { t: "http://{www.sa}", clip: true }, ...["498", "4", "475", "0,953815261", "486", "4", "469", "0,949", "12", "0", "6", "0,5"].map(num), ...blanks(9)] },
    { h: 31, cells: [{ t: "Painel Coron", clip: true }, { t: "https://painel-covid19.saude.ma.gov.br/casos", span: 4 }, ...blanks(9), num("410"), num("350"), num("0,853658537"), ...blanks(6)] },
    { h: 17, cells: [{ t: "Painel SEI C", clip: true }, { t: "https://{infovis.sei.ba.gov.br}/{covid19}/", span: 3 }, ...blanks(10), num("1211"), num("1051"), num("0,867877787"), ...blanks(6)] },
    { h: 17, cells: [NONE, { t: "https://www.{covid}-19.pa.gov.br/#/", span: 3 }, ...blanks(10), ...["495", "377", "0,761616162", "487", "373", "0,765913758", "8", "4"].map(num), NONE] },
    { h: 17, cells: [{ t: "Gestão de Le", clip: true }, { t: "https://{superset.plataformatarget.com.br}/{superset}/{dashboard}/72/", span: 5 }, ...blanks(8), num("428"), num("344"), num("0,803738318"), ...blanks(6)] },
    { h: 46, cells: [NONE, { t: "http://www.{coronavirus.pr.gov.br}/Campanha/Pagina/{Transparencia}-{Leitos}-SUS-{Exclusivos}-para-{COVID}#", span: 8 }, ...blanks(5), ...["1528", "1452", "0,95026178", "1506", "1438", "0,954847278", "22", "14"].map(num), { t: "0," }] },
    { h: 17, cells: [NONE, { t: "https://{dados.seplag.pe.gov.br}/apps/{corona.html}", span: 4 }, ...blanks(9), num("1068"), num("1015"), num("0,95"), ...blanks(6)] },
    { h: 17, cells: [NONE, { t: "https://{datastudio.google.com}/reporting/a6dc07e9-4161-4b5a-9f2a-6f9be486e8f9/{page}/2itOB", span: 7 }, ...blanks(6), num("377"), num("335"), num("0,888594164"), ...blanks(6)] },
];

const Sheet = () => (
    <SheetView>
        <HeadRow $h={20}>
            <RowHead />
            {COLUMNS.map(c => <ColHead key={c} $on={c === "F"}>{c}</ColHead>)}
        </HeadRow>
        <Row $h={46}>
            <RowHead>1</RowHead>
            {HEADERS.map((h, k) => (
                <Cell key={k}>
                    {h.split("|").map((line, i) => <span key={i}>{marked(line)}</span>)}
                </Cell>
            ))}
        </Row>
        {ROWS.map((r, i) => (
            <Row key={i} $h={r.h}>
                <RowHead $on={i + 2 === 8}>{i + 2}</RowHead>
                {r.cells.map((c, j) => (
                    <Cell key={j} $span={c.span} $right={c.n}>
                        <span>{marked(c.t)}</span>
                        {c.clip && <ClipMark />}
                    </Cell>
                ))}
            </Row>
        ))}
        {Array.from({ length: 34 }, (_, i) => (
            <Row key={i} $h={17}>
                <RowHead>{i + 10}</RowHead>
                {COLUMNS.map(c => <Cell key={c} />)}
            </Row>
        ))}
        <CellCursor />
    </SheetView>
);

const MENU: [string, number][] = [["File", 39], ["Edit", 43], ["View", 49], ["Insert", 55], ["Format", 66], ["Styles", 56], ["Sheet", 55], ["Data", 48], ["Tools", 51], ["Window", 70], ["Help", 40]];

const NavTri = ({ dir, bar }: { dir: "l" | "r"; bar?: boolean }) => (
    <svg width="14" height="17" viewBox="0 0 14 17">
        {bar && <path d={dir === "l" ? "M1 1h3v15H1z" : "M10 1h3v15h-3z"} fill="#6f6f6f" />}
        <path d={dir === "l" ? "M13 1v15L5 8.5z" : "M1 1v15l8-7.5z"} fill="#6f6f6f" />
    </svg>
);

const BigArrow = ({ up }: { up?: boolean }) => (
    <ToolSlot $gap={up ? 8 : 14} $w={19}>
        <svg width="19" height="19" viewBox="0 0 19 19">
            <path d={up ? "M9.5 1L17 10h-5v8H7v-8H2z" : "M9.5 18L17 9h-5V1H7v8H2z"} fill="#8f8f8f" />
        </svg>
    </ToolSlot>
);

const LibreOffice = () => (
    <Calc>
        <TitleBar>
            secretarias.ods - LibreOffice Calc
            <WindowButtons>
                <Minus size={10} />
                <svg width="11" height="11" viewBox="0 0 11 11"><path d="M3 1h7v7M1 3h6v7H1z" fill="none" stroke="#999" /></svg>
                <CloseCircle><X size={12} strokeWidth={2.5} /></CloseCircle>
            </WindowButtons>
        </TitleBar>
        <MenuBar>
            {MENU.map(([m, w]) => <MenuItem key={m} $w={w}>{m}</MenuItem>)}
            <MenuClose><X size={13} /></MenuClose>
        </MenuBar>
        <ToolRow $h={38}>
            <Grip />
            <Tools items={TOOLS_1} start={6} />
        </ToolRow>
        <ToolRow $h={40}>
            <Grip />
            <Combo $w={146} $ml={6}><ComboText>Liberation Sa</ComboText><ComboButton $w={36}><WhiteCaret /></ComboButton></Combo>
            <Combo $w={84} $ml={6}><ComboText>10</ComboText><ComboButton $w={33}><WhiteCaret /></ComboButton></Combo>
            <Tools items={TOOLS_2} start={248} />
        </ToolRow>
        <Body>
            <LeftColumn>
                <FormulaBar>
                    <NameBox $w={156} $ml={0}><ComboText>F8</ComboText><ComboButton $w={32}><WhiteCaret /></ComboButton></NameBox>
                    <FormulaIcon $x={17}>fx</FormulaIcon>
                    <FormulaIcon $x={8}>Σ</FormulaIcon>
                    <ToolSlot $gap={11} $w={8}><DropArrow /></ToolSlot>
                    <FormulaIcon $x={13}>=</FormulaIcon>
                    <FormulaInput>https://dados.seplag.pe.gov.br/apps/corona.html</FormulaInput>
                    <FormulaCaret><WhiteCaret /></FormulaCaret>
                </FormulaBar>
                <SheetWrap>
                    <Sheet />
                    <VScroll><VThumb /></VScroll>
                </SheetWrap>
                <HScroll><HThumb /></HScroll>
                <SheetTabs>
                    <NavTri dir="l" bar />
                    <NavTri dir="l" />
                    <NavTri dir="r" />
                    <NavTri dir="r" bar />
                    <Plus size={22} strokeWidth={3} color="#fff" />
                    <SheetTab>Sheet1</SheetTab>
                </SheetTabs>
            </LeftColumn>
            <Sidebar>
                <DeckStrip />
                <DeckHandle />
                <DeckIcons>
                    <Glyph name="gear" size={24} />
                    <DeckActive><Glyph name="props" size={24} /></DeckActive>
                    <Glyph name="styles" size={24} />
                    <Glyph name="gallery" size={24} />
                    <Glyph name="navigator" size={24} />
                    <Glyph name="fx" size={24} />
                </DeckIcons>
            </Sidebar>
        </Body>
        <FindBar>
            <Grip />
            <FindBadge><X size={13} strokeWidth={3.5} /></FindBadge>
            <FindField $w={249} $ml={6}><ComboText>Find</ComboText><ComboButton $w={32}><WhiteCaret /></ComboButton></FindField>
            <BigArrow up />
            <BigArrow />
            <FindAll>Find All</FindAll>
            <CheckBox $ml={10} />
            Formatted Display
            <CheckBox $ml={5} />
            Match Case
            <ToolSlot $gap={17} $w={22}><Glyph name="find" size={20} /></ToolSlot>
        </FindBar>
        <StatusBar>
            <StatusText $w={587} $ml={10}>Sheet 1 of 1</StatusText>
            <StatusText $w={290} $ml={10}>Default</StatusText>
            <StatusText $w={245} $ml={0}>Portuguese (Brazil)</StatusText>
            <StatusText $w={34} $ml={14}>{"I"}_</StatusText>
            <Glyph name="save" size={12} />
            <StatusText $w={300} $ml={234}>Average: ; Sum: 0</StatusText>
            <Minus size={10} color="#888" />
            <ZoomSlider />
            <Plus size={11} color="#aaa" />
            <StatusText $w={36} $ml={15}>100%</StatusText>
        </StatusBar>
    </Calc>
);

/* ---------- Favicons ---------- */

const FAVICONS: Record<string, React.ReactNode> = {
    g: <><circle cx="8" cy="8" r="8" fill="#fff" /><path d="M8 3a5 5 0 0 1 3.4 1.3M4 6a5 5 0 0 1 4-3" stroke="#ea4335" strokeWidth="2" fill="none" /><path d="M3.4 6a5 5 0 0 0 0 4" stroke="#fbbc05" strokeWidth="2" fill="none" /><path d="M3.6 10.2A5 5 0 0 0 11.5 11.6" stroke="#34a853" strokeWidth="2" fill="none" /><path d="M8 8h5a5 5 0 0 1-1.5 3.6" stroke="#4285f4" strokeWidth="2" fill="none" /></>,
    ds: <><rect x="8" y="1" width="7" height="4" rx="2" fill="#4285f4" /><rect x="1" y="6" width="7" height="4" rx="2" fill="#4285f4" /><rect x="8" y="11" width="7" height="4" rx="2" fill="#4285f4" /><path d="M7 5h3M5 10h3" stroke="#9dc0fb" /></>,
    drive: <><path d="M5 2h6l-5 9-3-1z" fill="#0f9d58" /><path d="M5 2h6l4 8H9z" fill="#f4b400" /><path d="M3 11h12l-2 3H5z" fill="#4285f4" /></>,
    shield: <><path d="M3 3h10v7c0 3-3 4-5 5-2-1-5-2-5-5z" fill="#2e7d56" /><path d="M5 4h6v6c0 2-2 3-3 3s-3-1-3-3z" fill="#c62828" /><path d="M4 2l1-2M12 2l-1-2M8 2V0" stroke="#555" /></>,
    coin: <><circle cx="8" cy="8" r="7.5" fill="#8a4d12" /><circle cx="8" cy="8" r="5.5" fill="#e08a25" /><path d="M5 8a3 3 0 0 1 6 0" stroke="#8a1e12" strokeWidth="2" fill="none" /></>,
    virus: <><circle cx="8" cy="8" r="4.5" fill="#1f9088" /><path d="M8 0v16M0 8h16M2.5 2.5l11 11M13.5 2.5l-11 11" stroke="#1f9088" strokeWidth="1.2" /></>,
    arrow: <><path d="M3 1l9 7-5 7V9z" fill="#58a846" /><path d="M7 4l5 4-5 7z" fill="#e88e3c" /></>,
    globe: <><circle cx="8" cy="8" r="7.5" fill="#26404a" /><path d="M6 1c3 1 4 2 3 4S5 6 5 8s3 2 3 4-1 3-2 3M12 5c2 1 2 3 1 4l-2-1z" fill="#ecfdfd" /></>,
    green: <><circle cx="8" cy="8" r="4" fill="#82c91e" /><path d="M8 0v16M0 8h16M2.5 2.5l11 11M13.5 2.5l-11 11" stroke="#82c91e" strokeWidth="1.3" strokeDasharray="2 1" /></>,
    flag: <><path d="M0 2h16v4H0z" fill="#1f6fb2" /><path d="M0 6h16v2H0z" fill="#fff" /><path d="M0 8h16v2H0z" fill="#2d8b57" /><path d="M0 10h16v4H0z" fill="#e0b92c" /><path d="M0 2l6 6-6 6z" fill="#145a32" /></>,
};

const Fav = ({ kind, size = 16 }: { kind: string; size?: number }) => (
    <svg width={size} height={size} viewBox="0 0 16 16">{FAVICONS[kind]}</svg>
);

const TABS: [string, string, boolean][] = [
    ["pia", "g", true], ["Pai", "ds", true], ["Pai", "drive", true], ["Tra", "shield", true], ["Tra", "shield", true], ["Co", "coin", true],
    ["Pai", "g", true], ["Pai", "virus", true], ["Int", "arrow", true], ["SE", "globe", true], ["Oc", "globe", true], ["Oc", "globe", true],
    ["SUSAM", "globe", false], ["COVID", "green", false], ["Painel", "flag", false], ["260 m", "g", false], ["COVID", "globe", false],
];

const Caret = () => <svg width="9" height="6"><path d="M0 0h9L4.5 6z" fill="#eee" /></svg>;

const TopBar = () => (
    <GnomeBar>
        Activities
        <GnomeText $ml={35}><svg width="16" height="16" viewBox="0 0 16 16"><circle cx="8" cy="8" r="7.5" fill="#999" /><circle cx="8" cy="8" r="3" fill="#333" /></svg></GnomeText>
        <GnomeText $ml={6}>Google Chrome</GnomeText>
        <NavIcon $ml={5}><Caret /></NavIcon>
        <ClockText $ml={494}>qua mar 10&nbsp;&nbsp;11:38</ClockText>
        <NavIcon $ml={8}><BellOff size={15} /></NavIcon>
        <NavIcon $ml={25}><svg width="14" height="18"><rect width="14" height="18" rx="2" fill="#555" /><text x="7" y="14" fontSize="13" textAnchor="middle" fill="#222" fontStyle="italic">A</text></svg></NavIcon>
        <NavIcon $ml={25}><svg width="15" height="18" viewBox="0 0 15 18"><path d="M2 1v7M7.5 1v7M13 1v7M1 8h13M3 8c0 7 9 7 9 0M7.5 12v5" stroke="#eee" fill="none" strokeWidth="1.4" /></svg></NavIcon>
        <NavIcon $ml={24}><svg width="16" height="16" viewBox="0 0 16 16"><rect x="1" y="1" width="14" height="14" rx="2" fill="none" stroke="#eee" /><path d="M3 9h3l1-4 2 7 1-3h3" stroke="#eee" fill="none" /></svg></NavIcon>
        <MeterLabel $w={31}>cpu</MeterLabel>
        <Meter $ml={0} $w={65}><svg width="65" height="27"><path d="M0 27V21l4-1 5 3 10 1 12-1 12-1 5-2 4 1 2-6 3 8 8-1v6z" fill="#0b7fc4" /></svg></Meter>
        <MeterLabel $w={29}>m...</MeterLabel>
        <Meter $ml={0} $w={66}><svg width="66" height="27"><rect width="66" height="27" fill="#a5f3c6" /><path d="M0 27V7h30l2-1h20l14-1v22z" fill="#00b25c" /></svg></Meter>
        <MeterLabel $w={28}>s...</MeterLabel>
        <Meter $ml={0} $w={66}><svg width="66" height="27"><rect width="66" height="27" fill="#2b2b2b" /></svg></Meter>
        <MeterLabel $w={27}>disk</MeterLabel>
        <Meter $ml={0} $w={66}><svg width="66" height="27"><path d="M0 27V12l2 12 6-1 2 3 4-2 2 3 6-2 2-6 2 7 6-3 2 2 8-3 3-14 2 14 5-2 4 1 2-3 2 4v1z" fill="#e66a00" /></svg></Meter>
        <GnomeText $ml={17}>en₁</GnomeText>
        <NavIcon $ml={4}><Caret /></NavIcon>
        <NavIcon $ml={30}><svg width="17" height="17" viewBox="0 0 17 17"><path d="M8.5 16L1 4c4-4 11-4 15 0z" fill="#eee" /><path d="M8.5 12L4 5c3-2 6-2 9 0z" fill="#1c1c1c" /><path d="M8.5 13L5.5 8c2-1 4-1 6 0z" fill="#eee" /></svg></NavIcon>
        <NavIcon $ml={13}><Volume1 size={17} /></NavIcon>
        <NavIcon $ml={11}><svg width="15" height="20" viewBox="0 0 15 20"><path d="M6 1h7v18H6z" fill="none" stroke="#eee" strokeWidth="1.3" /><path d="M8 4h3v13H8zM3 7L1 11h2l-1 4" fill="#eee" stroke="#eee" /></svg></NavIcon>
        <GnomeText $ml={6}>99 %</GnomeText>
        <NavIcon $ml={5}><Caret /></NavIcon>
    </GnomeBar>
);

const Browser = () => (
    <Chrome>
        <TopBar />
        <TabStrip>
            {TABS.map(([label, fav, closable], i) => (
                <Tab key={i} $active={i === 1} $pad={closable ? 11 : 7}>
                    <Fav kind={fav} />
                    <TabLabel $w={closable ? 18 : 48}>{label}</TabLabel>
                    {closable && <X size={11} strokeWidth={2.5} />}
                </Tab>
            ))}
            <NewTab><Plus size={17} strokeWidth={2.4} /></NewTab>
            <ChromeControls>
                <Minus size={12} strokeWidth={3} />
                <svg width="11" height="11" viewBox="0 0 11 11"><path d="M3.5 1h6.5v6.5M1 3.5h6.5V10H1z" fill="none" stroke="currentColor" strokeWidth="1.6" /></svg>
                <X size={14} strokeWidth={2.5} />
            </ChromeControls>
        </TabStrip>
        <AddressRow>
            <ArrowLeft size={17} />
            <NavIcon $ml={15}><ArrowRight size={17} /></NavIcon>
            <NavIcon $ml={15} $color="#1f2b2b"><RotateCw size={15} strokeWidth={2.6} /></NavIcon>
            <Omnibox>
                <Lock size={12} fill="#37474f" />
                <UrlText><b>datastudio.google.com</b>/reporting/a6dc07e9-4161-4b5a-9f2a-6f9be486e8f9/page/2itOB</UrlText>
                <NavIcon $ml={0} $color="#4a5a5a"><EyeOff size={15} /></NavIcon>
                <NavIcon $ml={17} $mr={9} $color="#4a5a5a"><Star size={15} /></NavIcon>
            </Omnibox>
            <NavIcon $ml={14}><svg width="18" height="18" viewBox="0 0 18 18"><path d="M6 1h6l5 5v6l-5 5H6l-5-5V6z" fill="#d01c1c" /><text x="9" y="12" fontSize="7" fontWeight="700" fill="#fff" textAnchor="middle">ABP</text></svg><AbpBadge>1</AbpBadge></NavIcon>
            <NavIcon $ml={13}><svg width="17" height="17"><circle cx="8.5" cy="8.5" r="8" fill="#a8d8f0" /><path d="M5 5l3.5 8L12 4" stroke="#fff" strokeWidth="2" fill="none" /></svg></NavIcon>
            <NavIcon $ml={15}><svg width="17" height="18" viewBox="0 0 17 18"><path d="M1 2h15L9.5 17h-2z" fill="#1a6fc4" /><path d="M5 4h7l-3 7z" fill="#ecfdfd" /></svg></NavIcon>
            <NavIcon $ml={15}><svg width="15" height="18" viewBox="0 0 15 18"><rect x="1" y="3" width="13" height="15" fill="#f0b98a" /><rect x="5" y="0" width="5" height="3" fill="#333" /><path d="M5 7v4M10 7v4M5 13h1M10 13h1" stroke="#333" strokeWidth="1.5" /></svg></NavIcon>
            <NavIcon $ml={16}><svg width="17" height="17"><rect width="17" height="17" rx="2" fill="#1f88c9" /><path d="M3 5h5v8H3zM9 5h5v8H9z" fill="#eaf6ff" /></svg></NavIcon>
            <NavIcon $ml={16} $color="#12342f"><Puzzle size={16} fill="#12342f" /></NavIcon>
            <NavIcon $ml={14}><svg width="21" height="21"><circle cx="10.5" cy="10.5" r="10.5" fill="#8fd3f4" /><circle cx="10.5" cy="10.5" r="7" fill="#1a7fd0" /><path d="M8 6l5 1-2 8-2-4z" fill="#fff" /></svg></NavIcon>
            <NavIcon $ml={11} $color="#12342f"><MoreVertical size={17} strokeWidth={2.5} /></NavIcon>
        </AddressRow>
        <PageHeader>
            <Fav kind="ds" size={28} />
            <Titles>
                <ReportTitle>Painel Covid-19 • Piauí</ReportTitle>
                <PageNav><ChevronLeft size={14} />Página 1 (Page 1 of 3)<ChevronRight size={16} color="#555" /></PageNav>
            </Titles>
            <svg width="14" height="14" viewBox="0 0 14 14"><path d="M1 4V1h3M10 1h3v3M13 10v3h-3M4 13H1v-3" fill="none" stroke="#444" strokeWidth="1.6" /></svg>
            <ShareButton>
                <ShareMain><UserPlus size={20} />Share</ShareMain>
                <ShareCaret />
            </ShareButton>
            <AppsGrid><svg width="17" height="17" viewBox="0 0 17 17"><path d="M0 0h7v7H0zM10 0h7v7h-7zM0 10h7v7H0zM10 10h7v7h-7z" fill="#5f6368" /></svg></AppsGrid>
            <Avatar><svg width="32" height="32" viewBox="0 0 32 32"><circle cx="16" cy="16" r="16" fill="#616161" /><circle cx="16" cy="12" r="6" fill="#fff" /><path d="M5 26c3-7 19-7 22 0a14 14 0 0 1-22 0z" fill="#fff" /></svg></Avatar>
        </PageHeader>
        <Report>
            <Page>
                <TopCharts>
                    <BarChart />
                    <WeeklyChart />
                </TopCharts>
                <Band $h={29} $pt={3}>
                    <BandTitle $ml={19}>Taxa Ocupação de:  Leitos Clínicos</BandTitle>
                    <BandTitle $ml={81}>Leitos UTI</BandTitle>
                    <BandTitle $ml={233}>Leitos Estabilização</BandTitle>
                    <BandTitle $ml={99}>Leitos com Respirador</BandTitle>
                </Band>
                <DonutRow>
                    <Donut share={71} labels={[[-46, -37, "29%", 14], [46, 36, "71%", 14]]} shift={-2} />
                    <MathSpacer />
                    <Donut share={88.9} labels={[[19, 52, "88.9%", 14]]} highlight />
                    <MathSign $w={61} $h={60} $ml={33} $mt={-5}><PlusH /><PlusV /></MathSign>
                    <Donut share={47.6} labels={[[-57, 5, "52.4%", 12], [56, -3, "47.6%", 12]]} ml={46} />
                    <MathSign $w={58} $h={38} $ml={23} $mt={6}><EqualBar $top={0} /><EqualBar $top={28} /></MathSign>
                    <Donut share={77.3} labels={[[-35, -39, "22.7%", 14], [33, 41, "77.3%", 14]]} ml={29} />
                    <ChartTools>
                        AZ
                        <ToolDivider />
                        ⋮
                    </ChartTools>
                    <Legend>
                        <LegendDot $color={LIGHT} $ml={0} />Disponíveis
                        <LegendDot $color={DARK} $ml={24} />Ocupados
                    </Legend>
                    <ToolTip>
                        <span>Disponíveis</span>
                        <Strong>42 (11.1%)</Strong>
                    </ToolTip>
                </DonutRow>
                <Band $h={30} $pt={6} $center>Capacidade de Internação de Leitos Clínicos por Quantidade de Internados</Band>
                <CapacityChart />
            </Page>
            <ReportScroll />
        </Report>
    </Chrome>
);

/* ---------- Charts ---------- */

const BARS: [string, number, string][] = [
    ["Doença hematológica", 0.07, "0.07"], ["Doença hepática", 1.1, "1.1"], ["Puérpera", 0.02, "0.02"],
    ["Síndrome de Down", 0.2, "0.2"], ["Neoplasia", 2.72, "2.72"], ["Sem comorbidades", 4.67, "4.67"],
];

const BarChart = () =>
{
    const x0 = 509.2;
    const unit = 6.72;
    const grid = Array.from({ length: 10 }, (_, i) => x0 + (i + 1) * 33.65);
    return (
        <ChartSvg width="507" height="221" viewBox="373 1243 507 221">
            {grid.map(x => <line key={x} x1={x} x2={x} y1="1243" y2="1436" stroke="#d0d0d0" />)}
            <line x1={x0} x2={x0} y1="1243" y2="1436" stroke="#222" />
            {BARS.map(([name, v, label], i) =>
            {
                const y = 1261 + i * 31.7;
                const end = x0 + v * unit;
                return (
                    <g key={name}>
                        <text x="506" y={y + 4} fontSize="12" fill="#222" textAnchor="end">{name}</text>
                        <rect x={x0} y={y - 12.5} width={v * unit} height="25" fill={DARK} />
                        {v < 4 && <line x1={end} x2={end + 12} y1={y} y2={y} stroke="#aaa" />}
                        <text x={v < 4 ? end + 12 : x0 + 4} y={y + 4} fontSize="12" fill={v < 4 ? DARK : "#fff"}>{label}</text>
                    </g>
                );
            } )}
            {[0, 10, 20, 30, 40, 50].map(v => <text key={v} x={x0 + v * unit} y="1450" fontSize="12" fill="#222" textAnchor="middle">{v}</text>)}
        </ChartSvg>
    );
};

const WEEK_DARK = [221, 236, 208, 165, 34, 10, 8, 15, 12, 20, 24, 75, 123, 144, 130, 146, 195, 291, 345, 372, 410, 440, 470, 500, 520, 500, 480, 500, 470, 450, 430, 410, 395, 380, 368, 352, 352, 315, 338, 286, 283, 316, 236, 269, 241, 263, 263, 220, 209, 225, 252, 213, 201];
const WEEK_LIGHT = [7, 7, 6, 6, 8, 10, 8, 15, 12, 20, 24, 24, 21, 28, 26, 21, 22, 15, 19, 11, 13, 13, 12, 9, 10, 6, 10, 9, 10, 4, 8, 2, 3, 7, 6, 3, 4, 10, 6, 7, 2, 3, 3, 3, 7, 6, 1, 4, 3, 5, 0, 2, 0];

const weekX = (i: number) => 938.5 + i * 11.54;
const weekY = (v: number) => 1410.3 - v * 0.47;

const smooth = (vals: number[]) =>
{
    const p = vals.map((v, i) => [weekX(i), weekY(v)]);
    let d = `M${p[0][0]} ${p[0][1]}`;
    for (let i = 0; i < p.length - 1; i++)
    {
        const a = p[Math.max(i - 1, 0)], b = p[i], c = p[i + 1], e = p[Math.min(i + 2, p.length - 1)];
        d += `C${b[0] + (c[0] - a[0]) / 6} ${b[1] + (c[1] - a[1]) / 6} ${c[0] - (e[0] - b[0]) / 6} ${c[1] - (e[1] - b[1]) / 6} ${c[0]} ${c[1]}`;
    }
    return d;
};

const WeeklyChart = () => (
    <ChartSvg width="693" height="221" viewBox="880 1243 693 221">
        {[1269.3, 1316.3, 1363.3].map(y => <line key={y} x1="932" x2="1545" y1={y} y2={y} stroke="#d0d0d0" />)}
        <text x="919" y="1321" fontSize="12" fill="#222" textAnchor="end">200</text>
        <text x="919" y="1415" fontSize="12" fill="#222" textAnchor="end">0</text>
        {[WEEK_LIGHT, WEEK_DARK].map((vals, s) => vals.map((v, i) => (
            <g key={`${s}-${i}`}>
                <line x1={weekX(i)} x2={weekX(i)} y1={weekY(v)} y2={weekY(v) - 13} stroke="#bdbdbd" />
                <text x={weekX(i)} y={weekY(v) - 13} fontSize="13" fill={s ? DARK : LIGHT} textAnchor="middle">{v}</text>
            </g>
        )))}
        <path d={smooth(WEEK_LIGHT)} stroke={LIGHT} strokeWidth="4" fill="none" />
        <path d={smooth(WEEK_DARK)} stroke={DARK} strokeWidth="4" fill="none" />
        <line x1="932" x2="1545" y1="1410.3" y2="1410.3" stroke="#111" strokeWidth="1.3" />
        {Array.from({ length: 18 }, (_, k) => k * 3).map(i => (
            <text key={i} x={weekX(i) + 2} y="1427" fontSize="12" fill="#222" textAnchor="end" transform={`rotate(-30 ${weekX(i) + 2} 1427)`}>Semana {i + 1}</text>
        ))}
    </ChartSvg>
);

const polar = (r: number, pct: number) =>
{
    const a = (pct / 100) * Math.PI * 2;
    return [95 + r * Math.sin(a), 95 - r * Math.cos(a)];
};

const ring = (from: number, to: number, ro: number, ri: number) =>
{
    const [a, b] = polar(ro, from), [c, d] = polar(ro, to), [e, f] = polar(ri, to), [g, h] = polar(ri, from);
    const big = to - from > 50 ? 1 : 0;
    return `M${a} ${b}A${ro} ${ro} 0 ${big} 1 ${c} ${d}L${e} ${f}A${ri} ${ri} 0 ${big} 0 ${g} ${h}Z`;
};

const Donut = ({ share, labels, highlight, shift = 0, ml = 0 }: { share: number; labels: [number, number, string, number][]; highlight?: boolean; shift?: number; ml?: number }) =>
{
    const ro = shift ? 87 : 85;
    const ri = shift ? 39 : 38;
    return (
        <ChartSvg width="190" height="190" viewBox={`0 ${-shift} 190 190`} $ml={ml}>
            <path d={ring(0, share, ro, ri)} fill={DARK} />
            <path d={ring(share, 100, ro, ri)} fill={PALE} />
            {highlight && <>
                <path d={ring(0, share, 90, 88)} fill={DARK} />
                <path d={ring(share, 100, 93, 87)} fill="#dfecdf" />
            </>}
            {labels.map(([x, y, t, size]) => (
                <text key={t} x={95 + x} y={95 + y + size / 3} fontSize={size} fill="#222" textAnchor="middle">{t}</text>
            ))}
        </ChartSvg>
    );
};

const CAPACITY: [number, number][] = [
    [404, 1877.7], [472, 1877.7], [476, 1876], [482, 1873.7], [498, 1872], [528, 1872], [531, 1869], [538, 1863], [554, 1860], [555, 1852], [557, 1858], [595, 1856.7], [598, 1842.7], [605, 1833], [628, 1832],
    [630, 1839], [646, 1839], [666, 1834], [697, 1830.7], [722, 1832], [758, 1835.7], [765, 1831], [773, 1831], [775, 1835], [794, 1835.7], [799, 1839], [824, 1839], [827, 1843], [837, 1843], [840, 1849], [845, 1851], [862, 1850],
    [864, 1865], [895, 1865], [898, 1870.7], [929, 1873], [932, 1868], [936, 1874], [967, 1876], [972, 1879], [998, 1881.7], [1023, 1882.5], [1054, 1882], [1056, 1884], [1069, 1885], [1077, 1887.7], [1140, 1888], [1156, 1889],
    [1254, 1889], [1259, 1891], [1271, 1890], [1304, 1890], [1306, 1887], [1308, 1901], [1320, 1903], [1323, 1901], [1335, 1899], [1349, 1901], [1352, 1898], [1355, 1901], [1369, 1896], [1375, 1898.7], [1385, 1900], [1394, 1892],
    [1402, 1901], [1408, 1904], [1411, 1897], [1414, 1904], [1419, 1900.7], [1436, 1901], [1438, 1905], [1453, 1905], [1465, 1903], [1485, 1904], [1490, 1900], [1499, 1897], [1506, 1894], [1516, 1891], [1523, 1891.5], [1528, 1886.7],
    [1538, 1883], [1550, 1877],
];

const capacityY = (x: number) =>
{
    for (let i = 1; i < CAPACITY.length; i++)
    {
        const [x1, y1] = CAPACITY[i];
        if (x <= x1)
        {
            const [x0, y0] = CAPACITY[i - 1];
            return y0 + ((x - x0) / (x1 - x0)) * (y1 - y0);
        }
    }
    return 1877;
};

const IN_A: [number, number][] = [[90, 835], [120, 825], [155, 825], [170, 832], [195, 825], [205, 816], [220, 820], [260, 795], [270, 800], [285, 790], [300, 770], [325, 768], [350, 755], [385, 747], [400, 715], [420, 705], [435, 712], [450, 708], [465, 717], [475, 692], [490, 698], [500, 690], [510, 702], [545, 668], [560, 670], [570, 650], [590, 645], [605, 623], [615, 630], [630, 600], [650, 612], [675, 600], [690, 608], [700, 598], [715, 612], [730, 608], [742, 620], [750, 607], [775, 610], [795, 598], [805, 605], [825, 645], [850, 648], [870, 670], [885, 665], [925, 680], [955, 680], [975, 688], [998, 665], [1020, 675], [1045, 692], [1055, 683], [1070, 680], [1105, 705], [1115, 702], [1125, 712], [1140, 712], [1162, 727], [1180, 711], [1210, 711], [1230, 723], [1250, 722], [1275, 730], [1295, 730], [1310, 722], [1350, 730], [1378, 725], [1412, 740], [1445, 727], [1470, 733], [1495, 727], [1520, 738], [1535, 730], [1560, 743]];
const IN_B: [number, number][] = [[15, 750], [38, 738], [65, 750], [85, 733], [95, 738], [110, 728], [130, 735], [155, 735], [165, 740], [190, 738], [205, 733], [250, 735], [300, 738], [310, 750], [330, 750], [355, 762], [365, 763], [380, 755], [400, 755], [415, 742], [440, 730], [480, 728], [497, 742], [530, 720], [550, 733], [570, 742], [590, 730], [610, 726], [650, 726], [665, 712], [680, 712], [690, 690], [705, 692], [712, 680], [725, 692], [742, 672], [752, 674], [760, 660], [785, 655], [805, 628]];

const internedPoints = [
    ...IN_A.map(([x, y]) => `${x / 1.96 + 360},${y / 3 + 1700}`),
    ...IN_B.map(([x, y]) => `${x / 2.063 + 1160},${y / 3 + 1700}`),
].join(" ");

const capacityBars = () =>
{
    let d = "";
    for (let x = 404.5; x < 1552; x += 3.42) d += `M${x.toFixed(1)} ${capacityY(x).toFixed(1)}V1980`;
    return d;
};

const CapacityChart = () => (
    <ChartSvg width="1200" height="246" viewBox="372 1734 1200 246">
        {[1760.3, 1798.3, 1835.3, 1873.3, 1911.3, 1948].map(y => <line key={y} x1="398" x2="1553" y1={y} y2={y} stroke="#cfcfcf" strokeWidth="1.2" />)}
        <path d={capacityBars()} stroke="#8fcb92" strokeWidth="2.2" opacity="0.9" fill="none" />
        <polyline points={internedPoints} stroke={DARK} strokeWidth="3.6" strokeLinejoin="round" fill="none" />
        <rect x="398" y="1742" width="28" height="14" fill={LIGHT} />
        <text x="431" y="1754" fontSize="14" fill="#222">Capacidade Leitos Clínicos</text>
        <rect x="622" y="1747.5" width="28" height="3.5" fill={DARK} />
        <text x="655" y="1754" fontSize="14" fill="#222">Internados Leitos Clínicos</text>
        <text x="396" y="1764" fontSize="10" fill="#222" textAnchor="end">1.5K</text>
        <text x="396" y="1839" fontSize="10" fill="#222" textAnchor="end">1K</text>
        <text x="396" y="1915" fontSize="10" fill="#222" textAnchor="end">500</text>
    </ChartSvg>
);

const App = () => (
    <>
        <Global />
        <LibreOffice />
        <Desktop>
            <Browser />
        </Desktop>
    </>
);

export default App;
